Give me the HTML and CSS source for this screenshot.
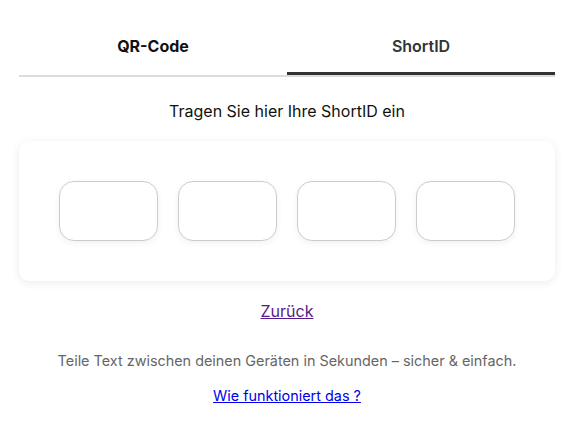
FILE: index.html
```html
<!DOCTYPE html>
<html lang="de">
<head>
<meta charset="utf-8">
<title>ShortID</title>
<link rel="stylesheet" href="styles.css">
</head>
<body>
<main class="page">
  <nav class="tabs">
    <div class="tab tab-qr">QR-Code</div>
    <div class="tab tab-active">ShortID</div>
  </nav>
  <p class="prompt">Tragen Sie hier Ihre ShortID ein</p>
  <section class="card">
    <input class="code-box" type="text" maxlength="1">
    <input class="code-box" type="text" maxlength="1">
    <input class="code-box" type="text" maxlength="1">
    <input class="code-box" type="text" maxlength="1">
  </section>
  <a class="back" href="#">Zurück</a>
  <p class="tagline">Teile Text zwischen deinen Geräten in Sekunden – sicher &amp; einfach.</p>
  <a class="howto" href="#how">Wie funktioniert das ?</a>
</main>
</body>
</html>
```
FILE: styles.css
```css
html, body {
  margin: 0;
  padding: 0;
  background: #fff;
}
body {
  font-family: Inter, "Noto Sans", "Liberation Sans", sans-serif;
  color: #111;
}
.page {
  width: 536px;
  margin: 0 0 0 19px;
  padding-top: 20px;
  display: flex;
  flex-direction: column;
  align-items: center;
}
.tabs {
  width: 100%;
  display: flex;
  border-bottom: 2px solid #dcdcdc;
}
.tab {
  flex: 1;
  text-align: center;
  font-size: 16px;
  line-height: 19px;
  padding: 17px 0 16px;
  border-bottom: 3px solid transparent;
}
.tab-qr {
  font-weight: 700;
  color: #111;
}
.tab-active {
  font-weight: 600;
  color: #333;
  border-bottom-color: #333;
}
.prompt {
  margin: 25px 0 0;
  font-size: 16px;
  line-height: 19px;
  color: #111;
}
.card {
  width: 100%;
  box-sizing: border-box;
  margin-top: 20px;
  padding: 40px;
  display: flex;
  gap: 20px;
  background: #fff;
  border-radius: 10px;
  box-shadow: 0 2px 10px rgba(0, 0, 0, 0.08);
}
.code-box {
  flex: 1;
  min-width: 0;
  height: 60px;
  box-sizing: border-box;
  border: 1px solid #cccccc;
  border-radius: 15px;
  background: #fff;
  box-shadow: 0 2px 6px rgba(0, 0, 0, 0.06);
  font: inherit;
  text-align: center;
  outline: none;
}
.back {
  margin-top: 21px;
  font-size: 16px;
  line-height: 19px;
  color: #551a8b;
}
.tagline {
  margin: 31px 0 0;
  font-size: 14.4px;
  line-height: 17px;
  color: #666;
}
.howto {
  margin-top: 18px;
  font-size: 14.4px;
  line-height: 17px;
  color: #0000ee;
}
```
